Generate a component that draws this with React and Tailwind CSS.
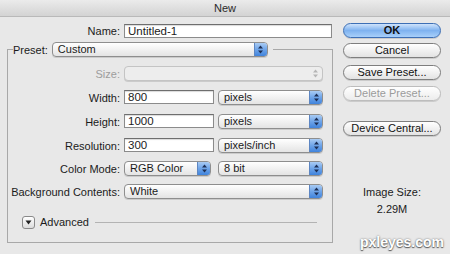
import React from 'react';

const Arrows = ({ dim }) => (
  <svg width="7" height="9" viewBox="0 0 7 9">
    <path d="M3.5 0.5 L6 3.5 L1 3.5 Z" fill={dim ? '#b5b5b5' : '#1d2f55'} />
    <path d="M3.5 8.5 L6 5.5 L1 5.5 Z" fill={dim ? '#b5b5b5' : '#1d2f55'} />
  </svg>
);

const Select = ({ w, value, disabled }) => (
  <div
    className={`flex h-[15px] ${w} items-stretch rounded-[4px] border ${
      disabled ? 'border-[#c4c4c4] bg-[#ededed]' : 'border-[#8e8e8e] bg-gradient-to-b from-white to-[#e4e4e4]'
    } shadow-[0_1px_0_rgba(0,0,0,0.12)]`}
  >
    <span className="flex-1 whitespace-nowrap pl-[5px] text-[11px] leading-[13px]">{value}</span>
    <span
      className={`flex w-[13px] items-center justify-center rounded-r-[3px] ${
        disabled ? '' : 'border-l border-[#5d86c2] bg-gradient-to-b from-[#a9cbf3] via-[#6ea4e8] to-[#3f83dc]'
      }`}
    >
      <Arrows dim={disabled} />
    </span>
  </div>
);

const Field = ({ w, value }) => (
  <div
    className={`h-[14px] ${w} border border-[#8b8b8b] border-t-[#6e6e6e] bg-white pl-[3px] text-[11.5px] leading-[12px] shadow-[inset_0_1px_1px_rgba(0,0,0,0.15)]`}
  >
    {value}
  </div>
);

const Row = ({ label, children, className = '' }) => (
  <div className={`flex items-center ${className}`}>
    <span className="w-[116px] whitespace-nowrap pr-[4px] text-right text-[11px] leading-[14px]">{label}</span>
    <div className="flex gap-[4px]">{children}</div>
  </div>
);

const Button = ({ children, primary, disabled, className = '' }) => (
  <button
    className={`h-[15px] w-[98px] rounded-full border text-[11px] leading-[13px] ${
      primary
        ? 'border-[#3d6fb5] bg-gradient-to-b from-[#cfe3fb] via-[#7fb2ef] to-[#a8d0fa] font-bold text-[#111]'
        : disabled
        ? 'border-[#bdbdbd] bg-gradient-to-b from-white to-[#ececec] text-[#9b9b9b]'
        : 'border-[#7e7e7e] bg-gradient-to-b from-white to-[#e3e3e3] text-[#111]'
    } shadow-[0_1px_0_rgba(0,0,0,0.12)] ${className}`}
  >
    {children}
  </button>
);

export default function App() {
  return (
    <div className="relative h-[254px] w-[450px] overflow-hidden bg-[#e8e8e8] font-['Liberation_Sans',Arial,sans-serif] text-[#1b1b1b]">
      <div className="flex h-[17px] items-center justify-center border-b border-[#b9b9b9] bg-gradient-to-b from-[#ebebeb] to-[#d3d3d3] text-[11px] text-[#2a2a2a]">
        New
      </div>

      <div className="flex">
        <div className="w-[333px] pl-[7px]">
          <div className="mt-[7px] flex items-center">
            <span className="w-[117px] pr-[4px] text-right text-[11px] leading-[14px]">Name:</span>
            <Field w="w-[208px]" value="Untitled-1" />
          </div>

          <fieldset className="mt-[4px] h-[201px] border border-[#a8a8a8]">
            <legend className="ml-[5px] flex items-center pr-[5px]">
              <span className="pr-[4px] text-[11px] leading-[14px]">Preset:</span>
              <Select w="w-[216px]" value="Custom" />
            </legend>

            <Row label="Size:" className="mt-[9px] text-[#9d9d9d]">
              <Select w="w-[199px]" value="" disabled />
            </Row>
            <Row label="Width:" className="mt-[9px]">
              <Field w="w-[90px]" value="800" />
              <Select w="w-[105px]" value="pixels" />
            </Row>
            <Row label="Height:" className="mt-[9px]">
              <Field w="w-[90px]" value="1000" />
              <Select w="w-[105px]" value="pixels" />
            </Row>
            <Row label="Resolution:" className="mt-[9px]">
              <Field w="w-[90px]" value="300" />
              <Select w="w-[105px]" value="pixels/inch" />
            </Row>
            <Row label="Color Mode:" className="mt-[8px]">
              <Select w="w-[87px]" value="RGB Color" />
              <div className="ml-[3px]">
                <Select w="w-[105px]" value="8 bit" />
              </div>
            </Row>
            <Row label="Background Contents:" className="mt-[8px]">
              <Select w="w-[199px]" value="White" />
            </Row>

            <div className="mt-[16px] flex items-center pl-[14px] pr-[15px]">
              <span className="flex h-[13px] w-[13px] items-center justify-center rounded-[3px] border border-[#8a8a8a] bg-gradient-to-b from-white to-[#dcdcdc]">
                <svg width="7" height="5" viewBox="0 0 7 5">
                  <path d="M0.5 0.5 L6.5 0.5 L3.5 4.5 Z" fill="#222" />
                </svg>
              </span>
              <span className="ml-[5px] text-[11px] leading-[14px]">Advanced</span>
              <span className="ml-[6px] h-px flex-1 bg-[#b3b3b3]" />
            </div>
          </fieldset>
        </div>

        <div className="ml-[10px] flex w-[98px] flex-col items-center">
          <Button primary className="mt-[6px]">OK</Button>
          <Button className="mt-[5px]">Cancel</Button>
          <Button className="mt-[7px]">Save Preset...</Button>
          <Button disabled className="mt-[6px]">Delete Preset...</Button>
          <Button className="mt-[20px]">Device Central...</Button>
          <div className="mt-[49px] text-[11px] leading-[14px]">Image Size:</div>
          <div className="mt-[3px] text-[11px] leading-[14px]">2.29M</div>
        </div>
      </div>

      <div className="absolute bottom-[4px] right-[6px] text-[14px] font-bold leading-[16px] text-white [text-shadow:0_0_2px_#6b6b6b,0_1px_1px_#555]">
        pxleyes.com
      </div>
    </div>
  );
}
